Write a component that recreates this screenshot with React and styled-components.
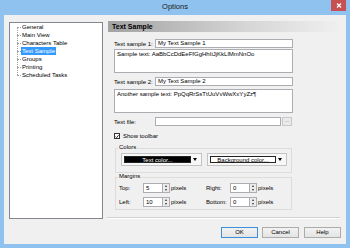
import React from "react";
import styled, { createGlobalStyle } from "styled-components";

const GlobalStyle = createGlobalStyle`
  html, body {
    margin: 0;
    padding: 0;
  }
  body {
    width: 350px;
    height: 248px;
    overflow: hidden;
    font-family: "Liberation Sans", Arial, sans-serif;
    font-size: 6px;
    color: #000;
  }
  * {
    box-sizing: border-box;
  }
`;

const Window = styled.div`
  width: 350px;
  height: 248px;
  background: #8fc2ef;
  padding: 0 4px 4px;
  display: flex;
  flex-direction: column;
`;

const TitleBar = styled.div`
  height: 15px;
  display: grid;
  grid-template-columns: 1fr auto 1fr;
  align-items: start;
`;

const Title = styled.div`
  grid-column: 2;
  font-size: 7.5px;
  line-height: 14px;
  color: #1a1a1a;
`;

const CloseButton = styled.div`
  grid-column: 3;
  justify-self: end;
  width: 15px;
  height: 11px;
  background: #c75050;
  display: flex;
  align-items: center;
  justify-content: center;
`;

const Client = styled.div`
  flex: 1;
  background: #f0f0f0;
  padding: 7px 5px 0;
  display: flex;
  flex-direction: column;
`;

const Body = styled.div`
  display: flex;
  height: 197px;
`;

const Tree = styled.div`
  width: 94px;
  border: 1px solid #828790;
  background: #fff;
`;

const TreeList = styled.ul`
  list-style: none;
  margin: 0 0 0 7px;
  padding: 0;
  position: relative;

  &::before {
    content: "";
    position: absolute;
    left: 0;
    top: 4px;
    bottom: 4px;
    border-left: 1px dotted #a0a0a0;
  }
`;

const TreeItem = styled.li`
  height: 8px;
  line-height: 8px;
  padding-left: 4px;
  position: relative;
  white-space: nowrap;

  &::before {
    content: "";
    position: absolute;
    left: 0;
    top: 4px;
    width: 4px;
    border-top: 1px dotted #a0a0a0;
  }
`;

const TreeLabel = styled.span`
  display: inline-block;
  padding: 0 1px;
  background: ${(p) => (p.$selected ? "#3399ff" : "transparent")};
  color: ${(p) => (p.$selected ? "#fff" : "#000")};
`;

const Panel = styled.div`
  width: 234px;
  margin-left: 4px;
  display: flex;
  flex-direction: column;
`;

const Header = styled.div`
  margin: -1px 0 0 1px;
  height: 11px;
  line-height: 11px;
  padding-left: 4px;
  font-weight: bold;
  font-size: 7px;
  background: linear-gradient(to right, #a2a2a2, #d6d6d6 60%, #f0f0f0);
`;

const Form = styled.div`
  padding-left: 7px;
  display: flex;
  flex-direction: column;
`;

const Row = styled.div`
  display: flex;
  align-items: center;
  height: ${(p) => p.$h || 9}px;
  margin-top: ${(p) => p.$mt || 0}px;
`;

const Label = styled.div`
  width: 41px;
  white-space: nowrap;
`;

const TextBox = styled.div`
  width: ${(p) => p.$w}px;
  height: 9px;
  border: 1px solid #abadb3;
  background: #fff;
  padding-left: 2px;
  line-height: 7px;
  white-space: nowrap;
  overflow: hidden;
`;

const TextArea = styled.div`
  width: 179px;
  height: 24px;
  margin-top: ${(p) => p.$mt}px;
  border: 1px solid #abadb3;
  background: #fff;
  padding: 1px 2px;
  line-height: 7px;
  white-space: nowrap;
  overflow: hidden;
`;

const BrowseButton = styled.div`
  width: 10px;
  height: 9px;
  margin-left: 1px;
  border: 1px solid #c8c8c8;
  background: #eaeaea;
  color: #777;
  font-size: 5px;
  line-height: 5px;
  text-align: center;
`;

const CheckBox = styled.div`
  width: 6px;
  height: 6px;
  border: 1px solid #333;
  background: #fff;
  margin-right: 3px;
  display: flex;
  align-items: center;
  justify-content: center;
`;

const Group = styled.div`
  width: 177px;
  height: ${(p) => p.$h}px;
  margin: ${(p) => p.$mt}px 0 0 1px;
  border: 1px solid #dcdcdc;
  display: flex;
  flex-direction: column;
`;

const GroupTitle = styled.div`
  margin: -5px 0 0 2px;
  padding: 0 1px;
  line-height: 7px;
  background: #f0f0f0;
  align-self: flex-start;
`;

const ColorRow = styled.div`
  display: flex;
  gap: 5px;
  margin-top: 2px;
  padding-left: 5px;
`;

const ColorPicker = styled.div`
  width: ${(p) => p.$w}px;
  height: 13px;
  border: 1px solid #c3c3c3;
  background: #f7f7f7;
  padding: 2px;
  display: flex;
  align-items: center;
`;

const ColorFace = styled.div`
  flex: 1;
  height: 100%;
  background: ${(p) => (p.$dark ? "#000" : "#fff")};
  color: ${(p) => (p.$dark ? "#fff" : "#000")};
  border: 1px solid #222;
  text-align: center;
  line-height: 6px;
  white-space: nowrap;
`;

const DropArrow = styled.div`
  width: 8px;
  display: flex;
  justify-content: center;

  &::after {
    content: "";
    border-left: 2.5px solid transparent;
    border-right: 2.5px solid transparent;
    border-top: 3px solid #000;
  }
`;

const MarginGrid = styled.div`
  display: grid;
  grid-template-columns: 24px 27px 36px 24px 27px auto;
  grid-auto-rows: 10px;
  row-gap: 4px;
  align-items: center;
  margin-top: 3px;
  padding-left: 3px;

  & > span:nth-child(3n) {
    padding-left: 1px;
  }
`;

const Spin = styled.div`
  display: flex;
  height: 10px;
`;

const SpinField = styled.div`
  width: 20px;
  height: 100%;
  border: 1px solid #abadb3;
  background: #fff;
  padding-left: 2px;
  line-height: 8px;
`;

const SpinButtons = styled.div`
  width: 7px;
  height: 100%;
  border: 1px solid #abadb3;
  border-left: none;
  background: #ececec;
  display: flex;
  flex-direction: column;
  align-items: center;
  justify-content: space-evenly;
`;

const SpinArrow = styled.div`
  border-left: 1.5px solid transparent;
  border-right: 1.5px solid transparent;
  border-${(p) => (p.$up ? "bottom" : "top")}: 2px solid #333;
`;

const Separator = styled.div`
  margin-top: auto;
  width: 233px;
  border-top: 1px solid #d0d0d0;
  border-bottom: 1px solid #fff;
`;

const Buttons = styled.div`
  display: flex;
  justify-content: flex-end;
  margin-top: 8px;
`;

const Button = styled.div`
  width: 37px;
  height: 11px;
  margin-left: ${(p) => p.$ml || 0}px;
  border: 1px solid ${(p) => (p.$default ? "#3c8fdc" : "#acacac")};
  background: linear-gradient(#f2f2f2, #e4e4e4);
  text-align: center;
  line-height: 9px;
`;

const treeItems = [
  "General",
  "Main View",
  "Characters Table",
  "Text Sample",
  "Groups",
  "Printing",
  "Scheduled Tasks",
];

const SpinBox = ({ value }) => (
  <Spin>
    <SpinField>{value}</SpinField>
    <SpinButtons>
      <SpinArrow $up />
      <SpinArrow />
    </SpinButtons>
  </Spin>
);

export default function App() {
  return (
    <>
      <GlobalStyle />
      <Window>
        <TitleBar>
          <Title>Options</Title>
          <CloseButton>
            <svg width="6" height="5" viewBox="0 0 6 5">
              <path d="M1 0.5 L5 4.5 M5 0.5 L1 4.5" stroke="#fff" strokeWidth="1.3" />
            </svg>
          </CloseButton>
        </TitleBar>
        <Client>
          <Body>
            <Tree>
              <TreeList>
                {treeItems.map((t) => (
                  <TreeItem key={t}>
                    <TreeLabel $selected={t === "Text Sample"}>{t}</TreeLabel>
                  </TreeItem>
                ))}
              </TreeList>
            </Tree>
            <Panel>
              <Header>Text Sample</Header>
              <Form>
                <Row $mt={7}>
                  <Label>Text sample 1:</Label>
                  <TextBox $w={138}>My Text Sample 1</TextBox>
                </Row>
                <TextArea $mt={1}>Sample text: AaBbCcDdEeFfGgHhIiJjKkLlMmNnOo</TextArea>
                <Row $mt={4}>
                  <Label>Text sample 2:</Label>
                  <TextBox $w={138}>My Text Sample 2</TextBox>
                </Row>
                <TextArea $mt={3}>Another sample text: PpQqRrSsTtUuVvWwXxYyZz¶</TextArea>
                <Row $mt={4}>
                  <Label>Text file:</Label>
                  <TextBox $w={126} />
                  <BrowseButton>...</BrowseButton>
                </Row>
                <Row $mt={6} $h={8}>
                  <CheckBox>
                    <svg width="5" height="5" viewBox="0 0 5 5">
                      <path d="M0.6 2.6 L2 4 L4.5 0.8" stroke="#000" strokeWidth="1" fill="none" />
                    </svg>
                  </CheckBox>
                  Show toolbar
                </Row>
                <Group $h={25} $mt={8}>
                  <GroupTitle>Colors</GroupTitle>
                  <ColorRow>
                    <ColorPicker $w={81}>
                      <ColorFace $dark>Text color...</ColorFace>
                      <DropArrow />
                    </ColorPicker>
                    <ColorPicker $w={80}>
                      <ColorFace>Background color...</ColorFace>
                      <DropArrow />
                    </ColorPicker>
                  </ColorRow>
                </Group>
                <Group $h={33} $mt={4}>
                  <GroupTitle>Margins</GroupTitle>
                  <MarginGrid>
                    <span>Top:</span>
                    <SpinBox value="5" />
                    <span>pixels</span>
                    <span>Right:</span>
                    <SpinBox value="0" />
                    <span>pixels</span>
                    <span>Left:</span>
                    <SpinBox value="10" />
                    <span>pixels</span>
                    <span>Bottom:</span>
                    <SpinBox value="0" />
                    <span>pixels</span>
                  </MarginGrid>
                </Group>
              </Form>
              <Separator />
            </Panel>
          </Body>
          <Buttons>
            <Button $default>OK</Button>
            <Button $ml={4}>Cancel</Button>
            <Button $ml={5}>Help</Button>
          </Buttons>
        </Client>
      </Window>
    </>
  );
}
